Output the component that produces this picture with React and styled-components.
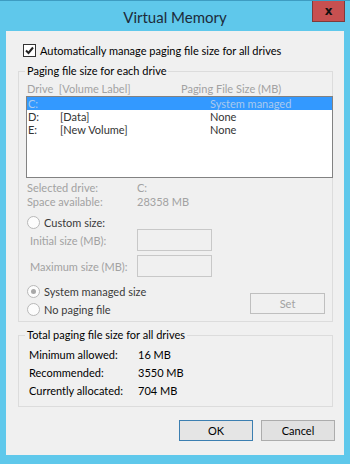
import React from 'react';
import styled, { createGlobalStyle } from 'styled-components';

const GlobalStyle = createGlobalStyle`
  html, body {
    margin: 0;
    padding: 0;
  }
  body {
    font-family: 'Segoe UI', Lato, 'Noto Sans', sans-serif;
    font-size: 11px;
  }
`;

const frameBlue = '#5fc8eb';
const disabledText = '#a2a2a2';
const labelText = '#3a3a3a';

const Frame = styled.div`
  width: 350px;
  height: 464px;
  box-sizing: border-box;
  background: ${frameBlue};
  border-top: 1px solid #3e9cc2;
  display: flex;
  flex-direction: column;
  position: relative;
`;

const TitleBar = styled.div`
  height: 30px;
  display: flex;
  align-items: center;
  justify-content: center;
  font-size: 15px;
  color: #1d2b3a;
  padding-top: 1px;
  box-sizing: border-box;
`;

const CloseButton = styled.div`
  position: absolute;
  top: 0;
  right: 5px;
  width: 33px;
  height: 21px;
  box-sizing: border-box;
  background: #c75050;
  border: 1px solid #7e3b3b;
  border-top: none;
  display: flex;
  align-items: center;
  justify-content: center;
  color: #111;
  font-family: 'DejaVu Sans', sans-serif;
  font-weight: bold;
  font-size: 12px;
`;

const Client = styled.div`
  margin: 0 6px;
  height: 424px;
  box-sizing: border-box;
  background: #f0f0f0;
  padding: 12px 11px 0 12px;
  display: flex;
  flex-direction: column;
  color: #000;
`;

const CheckRow = styled.label`
  display: flex;
  align-items: center;
  gap: 4px;
  margin-left: 5px;
  height: 14px;
  white-space: nowrap;
`;

const CheckBox = styled.span`
  width: 11px;
  height: 11px;
  border: 1px solid #333;
  background: #fff;
  display: flex;
  align-items: center;
  justify-content: center;
`;

const Group = styled.fieldset`
  margin: ${p => p.$top}px 0 0 0;
  padding: 0;
  border: 1px solid #dcdcdc;
  min-width: 0;
  display: flex;
  flex-direction: column;
`;

const Legend = styled.legend`
  margin-left: 6px;
  padding: 0 2px;
  line-height: 14px;
  white-space: nowrap;
`;

const ColumnHeader = styled.div`
  display: grid;
  grid-template-columns: 154px 1fr;
  color: ${disabledText};
  padding-left: 8px;
  height: 16px;
  align-items: center;
  margin-top: 2px;
  white-space: nowrap;
`;

const ListBox = styled.div`
  margin: 0 -1px 0 7px;
  height: 82px;
  box-sizing: border-box;
  border: 1px solid #828282;
  background: #fff;
`;

const ListRow = styled.div`
  display: grid;
  grid-template-columns: 32px 150px 1fr;
  height: 13px;
  line-height: 13px;
  padding-left: 1px;
  white-space: nowrap;
  background: ${p => (p.$selected ? '#3399ff' : 'transparent')};
  color: ${p => (p.$selected ? '#a9c9ee' : '#333')};
`;

const InfoGrid = styled.div`
  display: grid;
  grid-template-columns: 110px 1fr;
  color: ${disabledText};
  padding-left: 8px;
  margin-top: 3px;
  line-height: 14px;
  white-space: nowrap;
`;

const RadioRow = styled.div`
  display: flex;
  align-items: center;
  gap: 4px;
  margin: ${p => p.$top || 0}px 0 0 8px;
  height: 14px;
  color: ${labelText};
  white-space: nowrap;
`;

const Radio = styled.span`
  width: 11px;
  height: 11px;
  border-radius: 50%;
  border: 1px solid #b8b8b8;
  background: #fcfcfc;
  display: flex;
  align-items: center;
  justify-content: center;
  &::after {
    content: '';
    width: 5px;
    height: 5px;
    border-radius: 50%;
    background: ${p => (p.$checked ? '#a8a8a8' : 'transparent')};
  }
`;

const SizeRow = styled.div`
  display: grid;
  grid-template-columns: 107px 75px;
  align-items: center;
  padding-left: 11px;
  color: ${disabledText};
  height: 22px;
  margin-top: ${p => p.$top || 0}px;
  white-space: nowrap;
`;

const SizeInput = styled.div`
  height: 22px;
  box-sizing: border-box;
  border: 1px solid #c8c8c8;
  background: #f0f0f0;
`;

const BottomRow = styled.div`
  display: flex;
  align-items: flex-start;
  justify-content: space-between;
  padding-right: 7px;
  margin-bottom: 5px;
`;

const RadioStack = styled.div`
  display: flex;
  flex-direction: column;
`;

const Button = styled.div`
  width: ${p => p.$width || 75}px;
  height: 21px;
  box-sizing: border-box;
  display: flex;
  align-items: center;
  justify-content: center;
  margin-top: ${p => p.$top || 0}px;
  border: 1px solid ${p => (p.$disabled ? '#bfbfbf' : p.$default ? '#3c7fb1' : '#acacac')};
  background: ${p => (p.$disabled ? '#f0f0f0' : p.$default ? '#e5e5e5' : '#e1e1e1')};
  color: ${p => (p.$disabled ? disabledText : '#000')};
`;

const TotalsGrid = styled.div`
  display: grid;
  grid-template-columns: 109px 1fr;
  padding-left: 10px;
  margin-top: 4px;
  line-height: 18px;
  padding-bottom: 6px;
  white-space: nowrap;
`;

const Footer = styled.div`
  display: flex;
  justify-content: flex-end;
  gap: 8px;
  margin: 13px -2px 0 0;
`;

const drives = [
  { letter: 'C:', label: '', size: 'System managed', selected: true },
  { letter: 'D:', label: '[Data]', size: 'None' },
  { letter: 'E:', label: '[New Volume]', size: 'None' },
];

export default function App() {
  return (
    <>
      <GlobalStyle />
      <Frame>
        <TitleBar>Virtual Memory</TitleBar>
        <CloseButton>x</CloseButton>
        <Client>
          <CheckRow>
            <CheckBox>
              <svg width="9" height="9" viewBox="0 0 9 9">
                <path d="M1 4.5 L3.5 7 L8 1.5" stroke="#222" strokeWidth="2" fill="none" />
              </svg>
            </CheckBox>
            Automatically manage paging file size for all drives
          </CheckRow>

          <Group $top={7}>
            <Legend>Paging file size for each drive</Legend>
            <ColumnHeader>
              <span>Drive&nbsp; [Volume Label]</span>
              <span>Paging File Size (MB)</span>
            </ColumnHeader>
            <ListBox>
              {drives.map(d => (
                <ListRow key={d.letter} $selected={d.selected}>
                  <span>{d.letter}</span>
                  <span>{d.label}</span>
                  <span>{d.size}</span>
                </ListRow>
              ))}
            </ListBox>
            <InfoGrid>
              <span>Selected drive:</span>
              <span>C:</span>
              <span>Space available:</span>
              <span>28358 MB</span>
            </InfoGrid>
            <RadioRow $top={6}>
              <Radio />
              Custom size:
            </RadioRow>
            <SizeRow>
              <span>Initial size (MB):</span>
              <SizeInput />
            </SizeRow>
            <SizeRow $top={4}>
              <span>Maximum size (MB):</span>
              <SizeInput />
            </SizeRow>
            <BottomRow>
              <RadioStack>
                <RadioRow $top={7}>
                  <Radio $checked />
                  System managed size
                </RadioRow>
                <RadioRow $top={4}>
                  <Radio />
                  No paging file
                </RadioRow>
              </RadioStack>
              <Button $disabled $top={16}>Set</Button>
            </BottomRow>
          </Group>

          <Group $top={6}>
            <Legend>Total paging file size for all drives</Legend>
            <TotalsGrid>
              <span>Minimum allowed:</span>
              <span>16 MB</span>
              <span>Recommended:</span>
              <span>3550 MB</span>
              <span>Currently allocated:</span>
              <span>704 MB</span>
            </TotalsGrid>
          </Group>

          <Footer>
            <Button $default $width={74}>OK</Button>
            <Button $width={74}>Cancel</Button>
          </Footer>
        </Client>
      </Frame>
    </>
  );
}
